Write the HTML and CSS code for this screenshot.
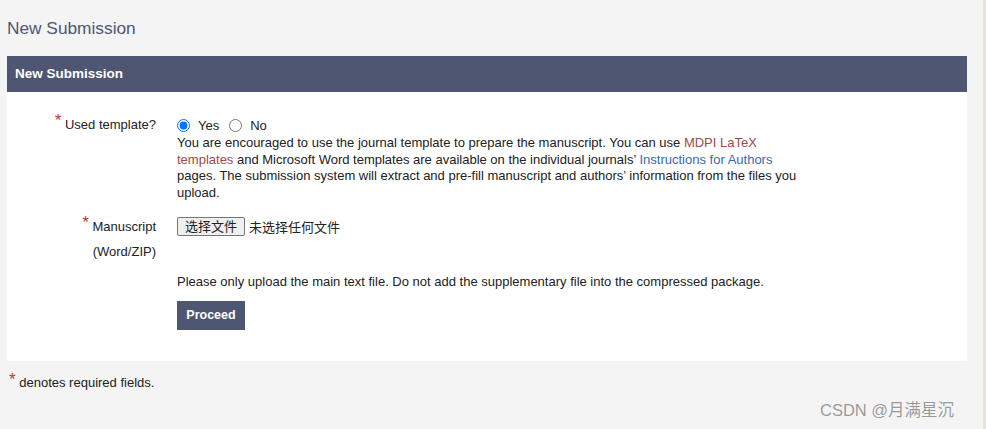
FILE: index.html
```html
<!DOCTYPE html>
<html>
<head>
<meta charset="utf-8">
<link rel="stylesheet" href="styles.css">
</head>
<body>
<div class="page">
  <h1 class="title">New Submission</h1>
  <div class="card">
    <div class="card-head">New Submission</div>
    <div class="card-body">
      <div class="row">
        <div class="label"><span class="req">*</span> Used template?</div>
        <div class="field">
          <div class="radios">
            <label class="radio"><input type="radio" name="tpl" checked> Yes</label>
            <label class="radio"><input type="radio" name="tpl"> No</label>
          </div>
          <p class="desc">You are encouraged to use the journal template to prepare the manuscript. You can use <a class="red" href="#">MDPI LaTeX templates</a> and Microsoft Word templates are available on the individual journals’ <a class="blue" href="#">Instructions for Authors</a> pages. The submission system will extract and pre-fill manuscript and authors’ information from the files you upload.</p>
        </div>
      </div>
      <div class="row row2">
        <div class="label label2"><span class="req">*</span> Manuscript<br>(Word/ZIP)</div>
        <div class="field">
          <div class="file"><span class="file-btn">选择文件</span><span class="file-name">未选择任何文件</span></div>
          <p class="note">Please only upload the main text file. Do not add the supplementary file into the compressed package.</p>
          <button class="proceed">Proceed</button>
        </div>
      </div>
    </div>
  </div>
  <p class="foot"><span class="req">*</span> denotes required fields.</p>
  <div class="mark">CSDN @月满星沉</div>
</div>
</body>
</html>
```
FILE: styles.css
```css
html, body {
  margin: 0;
  padding: 0;
  height: 100%;
}
body {
  background: #f4f4f4;
  font-family: Arial, "Liberation Sans", "Noto Sans CJK SC", sans-serif;
  color: #222;
  overflow: hidden;
  border-right: 3px solid #e9e2d8;
  box-sizing: border-box;
}
.page {
  padding: 0 16px 0 7px;
  position: relative;
  height: 100%;
}
.title {
  margin: 0;
  padding-top: 17px;
  font-size: 17.3px;
  font-weight: normal;
  color: #4f5671;
  line-height: 22px;
  height: 39px;
}
.card {
  width: 960px;
  background: #fff;
}
.card-head {
  background: #4f5671;
  color: #fff;
  font-weight: bold;
  font-size: 13.5px;
  height: 36px;
  line-height: 36px;
  padding-left: 8px;
}
.card-body {
  padding: 23px 0 31px;
}
.row {
  display: grid;
  grid-template-columns: 149px 630px;
  column-gap: 21px;
  font-size: 13px;
}
.row2 {
  margin-top: 14px;
}
.label {
  text-align: right;
  line-height: 25px;
  margin-top: -3px;
}
.label2 {
  margin-top: -2px;
}
.req {
  color: #c0392b;
  font-size: 17px;
  vertical-align: top;
  position: relative;
  top: -4px;
}
.radios {
  display: flex;
  gap: 10px;
  font-size: 13px;
  height: 20px;
  align-items: center;
}
.radio {
  display: flex;
  align-items: center;
  gap: 8px;
}
.radio input {
  margin: 0;
  width: 13px;
  height: 13px;
}
.desc {
  margin: 0;
  font-size: 13px;
  line-height: 16.7px;
}
.desc a {
  text-decoration: none;
}
.red { color: #9b4b4b; }
.blue { color: #3c67b0; }
.file {
  display: flex;
  align-items: center;
  font-size: 13px;
  height: 22px;
}
.file-btn {
  border: 1px solid #767676;
  border-radius: 2px;
  background: #efefef;
  padding: 0 7px;
  height: 17px;
  line-height: 17px;
  margin-right: 4px;
}
.note {
  margin: 36px 0 0;
  font-size: 13px;
  line-height: 16px;
}
.proceed {
  margin-top: 11px;
  background: #4f5671;
  color: #fff;
  border: none;
  font-family: inherit;
  font-weight: bold;
  font-size: 12.5px;
  width: 68px;
  height: 29px;
  padding: 0;
}
.foot {
  margin: 0;
  padding: 14px 0 0 2px;
  font-size: 13px;
}
.foot .req {
  top: -5px;
}
.mark {
  position: absolute;
  left: 820px;
  top: 397px;
  font-size: 16.5px;
  color: #999;
  text-shadow: 0 0 1px #fff;
}
```
